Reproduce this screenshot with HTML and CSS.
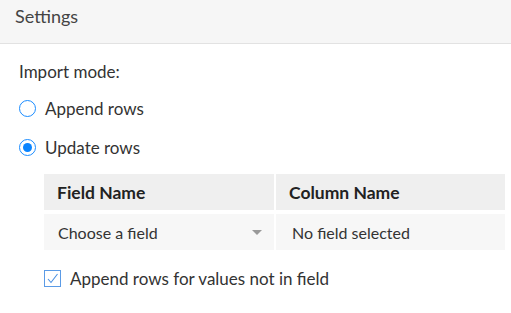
FILE: index.html
```html
<!DOCTYPE html>
<html lang="en">
<head>
    <meta charset="UTF-8">
    <title>Settings</title>
    <link rel="stylesheet" href="styles.css">
</head>
<body>
    <div class="panel-header">Settings</div>
    <div class="panel-body">
        <p class="mode-label">Import mode:</p>
        <label class="radio-row">
            <span class="radio"></span>
            <span>Append rows</span>
        </label>
        <label class="radio-row">
            <span class="radio checked"></span>
            <span>Update rows</span>
        </label>
        <div class="match-table">
            <div class="cell head">Field Name</div>
            <div class="cell head">Column Name</div>
            <div class="cell select">
                <span>Choose a field</span>
                <span class="caret"></span>
            </div>
            <div class="cell value">No field selected</div>
        </div>
        <label class="check-row">
            <span class="checkbox">
                <svg width="15" height="15" viewBox="0 0 15 15"><path d="M3 8 L6 11.5 L12.5 3" fill="none" stroke="#4a90e2" stroke-width="1.1"/></svg>
            </span>
            <span>Append rows for values not in field</span>
        </label>
    </div>
</body>
</html>
```

FILE: styles.css
```css
* { box-sizing: border-box; margin: 0; padding: 0; }
body {
    font-family: 'Lato', sans-serif;
    color: #333;
    background: #fff;
    font-size: 17px;
}
.panel-header {
    height: 44px;
    background: #f6f6f6;
    border-bottom: 1px solid #e2e2e2;
    padding: 5px 15px 0;
    font-size: 18px;
    color: #444;
}
.panel-body { padding: 17px 6px 0 19px; }
.mode-label { height: 22px; }
.radio-row {
    display: flex;
    align-items: center;
    gap: 9px;
    height: 39px;
}
.radio-row:first-of-type { margin-top: 6px; }
.radio {
    width: 17px;
    height: 17px;
    border: 1px solid #1a8cff;
    border-radius: 50%;
    display: flex;
    align-items: center;
    justify-content: center;
}
.radio.checked::after {
    content: '';
    width: 9px;
    height: 9px;
    border-radius: 50%;
    background: #0a84ff;
}
.match-table {
    display: grid;
    grid-template-columns: 230px 1fr;
    column-gap: 2px;
    row-gap: 4px;
    margin: 7px 0 0 25px;
}
.cell {
    height: 36px;
    display: flex;
    align-items: center;
}
.head {
    background: #efefef;
    font-weight: 700;
    font-size: 17.5px;
    padding-left: 13px;
    color: #222;
}
.select, .value {
    background: #f7f7f7;
    font-size: 16px;
}
.select { padding: 0 12px 0 14px; justify-content: space-between; }
.value { padding-left: 16px; }
.caret {
    width: 0;
    height: 0;
    border-left: 5px solid transparent;
    border-right: 5px solid transparent;
    border-top: 5px solid #999;
}
.check-row {
    display: flex;
    align-items: center;
    gap: 9px;
    margin: 18px 0 0 25px;
}
.checkbox {
    width: 17px;
    height: 17px;
    border: 1px solid #5b9be6;
    display: flex;
    align-items: center;
    justify-content: center;
}
```
